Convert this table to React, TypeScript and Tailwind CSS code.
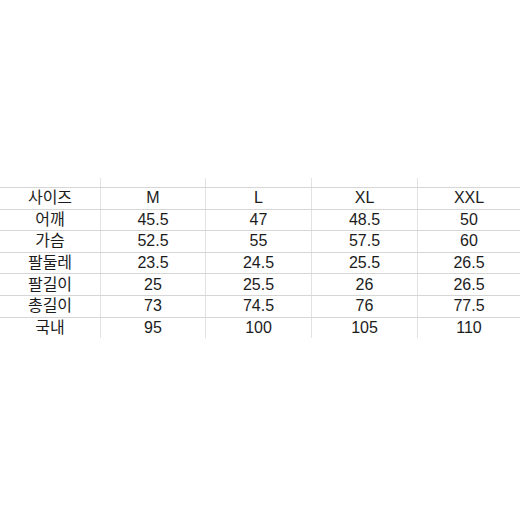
const cols = ['사이즈', 'M', 'L', 'XL', 'XXL'];
const rows: string[][] = [
  ['어깨', '45.5', '47', '48.5', '50'],
  ['가슴', '52.5', '55', '57.5', '60'],
  ['팔둘레', '23.5', '24.5', '25.5', '26.5'],
  ['팔길이', '25', '25.5', '26', '26.5'],
  ['총길이', '73', '74.5', '76', '77.5'],
  ['국내', '95', '100', '105', '110'],
];
const widths = ['w-[100px]', 'w-[105px]', 'w-[106px]', 'w-[106px]', 'w-[103px]'];

export default function App() {
  const all = [cols, ...rows];
  return (
    <div
      className="w-[520px] h-[520px] bg-white pt-[178px] text-[16px] text-[#1c1c1c]"
      style={{ fontFamily: '"Liberation Sans", Arial, "Noto Sans CJK KR", sans-serif' }}
    >
      <div className="flex h-[9px]">
        {widths.map((w, i) => (
          <div key={i} className={`${w} h-full ${i > 0 ? 'border-l border-[#e2e2e2]' : ''}`} />
        ))}
      </div>
      {all.map((r, ri) => (
        <div key={ri} className="flex h-[21.6px] border-t border-[#d6d6d6]">
          {r.map((c, ci) => (
            <div
              key={ci}
              className={`${widths[ci]} flex items-center justify-center leading-none ${ci > 0 ? 'border-l border-[#e2e2e2]' : ''}`}
            >
              {c}
            </div>
          ))}
        </div>
      ))}
    </div>
  );
}
